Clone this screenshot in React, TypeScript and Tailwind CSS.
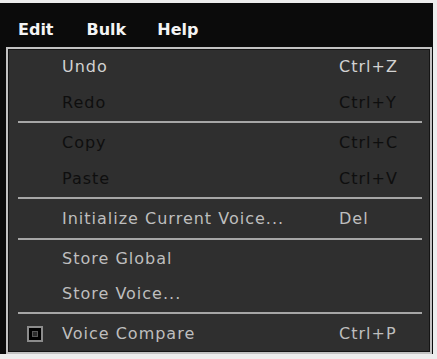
import React from 'react';

// Yamaha-style "Edit" drop-down menu

type Item = {
  label: string;
  shortcut?: string;
  disabled?: boolean;
  bright?: boolean;
  check?: boolean;
  h: string;
};

const menuFont = { fontFamily: '"DejaVu Sans", Verdana, sans-serif' };

function Row({ item }: { item: Item }) {
  const color = item.disabled
    ? 'text-[#0e0e0e]'
    : item.bright
    ? 'text-[#d2d2d2]'
    : 'text-[#bebebe]';
  return (
    <div className={`relative flex items-center ${item.h} ${color} text-[16px] tracking-[1px]`}>
      {item.check && (
        <span className="absolute left-[19px] top-[11px] flex h-[16px] w-[16px] items-center justify-center border-2 border-[#8c8c8c] bg-black">
          <span className="h-[6px] w-[6px] border border-[#5a5a5a] bg-[#2c2c2c]" />
        </span>
      )}
      <span className="w-[331px] pl-[54px] whitespace-nowrap">{item.label}</span>
      <span className="whitespace-nowrap">{item.shortcut}</span>
    </div>
  );
}

function Separator() {
  return (
    <div className="flex h-[4px] items-center pl-[10px] pr-[8px]">
      <div className="h-[2px] w-full bg-[#a6a6a6]" />
    </div>
  );
}

export default function App() {
  return (
    <div className="h-[359px] w-[437px] overflow-hidden bg-[#ededed] pt-[3px]" style={menuFont}>
      <div className="flex h-[351px] w-[433px] flex-col bg-[#0b0b0b]">
        {/* menu bar */}
        <div className="flex h-[44px] items-center pl-[18px] pt-[10px] text-[16px] font-bold text-[#f4f4f4]">
          <span>Edit</span>
          <span className="ml-[33px]">Bulk</span>
          <span className="ml-[31px]">Help</span>
        </div>

        {/* drop-down panel */}
        <div className="ml-[6px] flex h-[307px] w-[426px] flex-col border-2 border-[#c2c2c2] bg-[#2f2f2f] shadow-[inset_0_0_0_1px_#151515]">
          <Row item={{ label: 'Undo', shortcut: 'Ctrl+Z', bright: true, h: 'h-[36px]' }} />
          <Row item={{ label: 'Redo', shortcut: 'Ctrl+Y', disabled: true, h: 'h-[35px]' }} />
          <Separator />
          <Row item={{ label: 'Copy', shortcut: 'Ctrl+C', disabled: true, h: 'h-[37px]' }} />
          <Row item={{ label: 'Paste', shortcut: 'Ctrl+V', disabled: true, h: 'h-[35px]' }} />
          <Separator />
          <Row item={{ label: 'Initialize Current Voice...', shortcut: 'Del', h: 'h-[37px]' }} />
          <Separator />
          <Row item={{ label: 'Store Global', h: 'h-[35px]' }} />
          <Row item={{ label: 'Store Voice...', h: 'h-[35px]' }} />
          <Separator />
          <Row item={{ label: 'Voice Compare', shortcut: 'Ctrl+P', check: true, h: 'h-[37px]' }} />
        </div>
      </div>
    </div>
  );
}
